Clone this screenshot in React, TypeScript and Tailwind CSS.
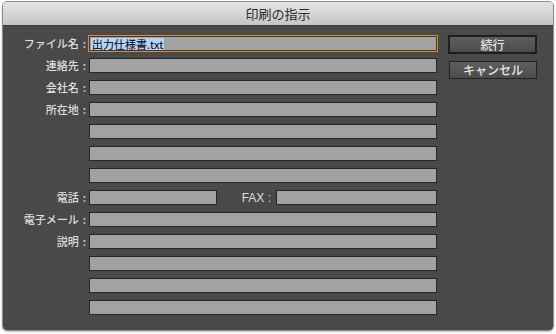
import React from 'react';

const FONT = { fontFamily: '"Noto Sans CJK JP", "Liberation Sans", sans-serif' };

type Row = { label: string; kind?: 'focus' | 'phone' };

const ROWS: Row[] = [
  { label: 'ファイル名', kind: 'focus' },
  { label: '連絡先' },
  { label: '会社名' },
  { label: '所在地' },
  { label: '' },
  { label: '' },
  { label: '' },
  { label: '電話', kind: 'phone' },
  { label: '電子メール' },
  { label: '説明' },
  { label: '' },
  { label: '' },
  { label: '' },
];

function Field({ className = '' }: { className?: string }) {
  return <div className={`h-[15px] border border-[#262626] bg-[#a2a2a2] ${className}`} />;
}

export default function App() {
  return (
    <div className="w-[556px] h-[334px] bg-white pl-[2px] pt-[1px]" style={FONT}>
      <div className="w-[552px] h-[330px] rounded-[5px] border border-[#8c8c8c] overflow-hidden flex flex-col shadow-[0_1px_2px_rgba(0,0,0,0.25)]">
        <div className="h-[24px] shrink-0 bg-gradient-to-b from-[#e4e4e4] to-[#c6c6c6] border-b border-[#3a3a3a] flex items-center justify-center text-[13px] text-[#2c2c2c]">
          印刷の指示
        </div>
        <div className="flex-1 bg-[#494949] flex pt-[10px]">
          <div className="flex flex-col gap-[7px]">
            {ROWS.map((row, i) => (
              <div key={i} className="flex items-center h-[15px]">
                <div className="w-[83px] text-right text-[11px] font-medium leading-none text-[#dedede] whitespace-nowrap">
                  {row.label && (
                    <>
                      {row.label}
                      <span className="ml-[4px]">:</span>
                    </>
                  )}
                </div>
                <div className="ml-[3px] w-[348px]">
                  {row.kind === 'focus' ? (
                    <div className="h-[15px] border border-[#3a3a3a] bg-[#a2a2a2] outline outline-[#e8892b] flex items-center pl-[1px]">
                      <span className="bg-[#b4d4fb] text-black text-[11px] leading-[12px] px-[1px]">出力仕様書.txt</span>
                    </div>
                  ) : row.kind === 'phone' ? (
                    <div className="flex items-center">
                      <Field className="w-[128px]" />
                      <div className="w-[59px] pr-[5px] text-right text-[12px] leading-none text-[#dedede] whitespace-nowrap" style={{ fontFamily: '"Liberation Sans", "Noto Sans CJK JP", sans-serif' }}>
                        FAX :
                      </div>
                      <Field className="w-[161px]" />
                    </div>
                  ) : (
                    <Field />
                  )}
                </div>
              </div>
            ))}
          </div>
          <div className="ml-[11px] flex flex-col">
            <button className="w-[89px] h-[19px] -mt-[1px] border-2 border-[#1e1e1e] bg-gradient-to-b from-[#5e5e5e] to-[#4c4c4c] text-[12px] font-medium leading-none text-[#e4e4e4]">
              続行
            </button>
            <button className="mt-[7px] ml-[1px] w-[88px] h-[18px] border border-[#222] bg-gradient-to-b from-[#5e5e5e] to-[#4c4c4c] text-[12px] font-medium leading-none text-[#e4e4e4]">
              キャンセル
            </button>
          </div>
        </div>
      </div>
    </div>
  );
}
